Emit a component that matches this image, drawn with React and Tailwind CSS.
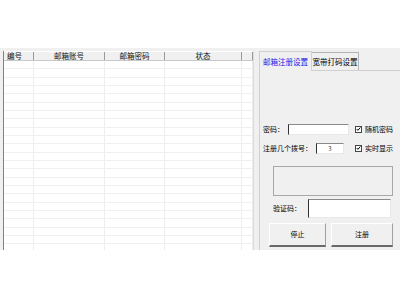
import React from 'react';

const font = { fontFamily: '"Noto Sans CJK SC", "Noto Sans", sans-serif' };

const columns = [
    { title: '编号', w: 'w-[30px]' },
    { title: '邮箱账号', w: 'w-[71px]' },
    { title: '邮箱密码', w: 'w-[60px]' },
    { title: '状态', w: 'w-[77px]' },
    { title: '', w: 'w-[11px]' },
];

const Check = () => (
    <span className="w-[7px] h-[7px] border border-[#444] bg-white flex items-center justify-center">
        <svg width="6" height="6" viewBox="0 0 6 6">
            <path d="M0.8 3 L2.3 4.6 L5.2 1.2" fill="none" stroke="#000" strokeWidth="1.2" />
        </svg>
    </span>
);

const Input = ({ className, children }) => (
    <div className={`bg-white border-t border-l border-t-[#8a8a8a] border-l-[#333] border-b border-r border-b-[#e8e8e8] border-r-[#e8e8e8] flex items-center justify-center text-[6px] text-[#333] ${className}`}>
        {children}
    </div>
);

const Button = ({ className, children }) => (
    <div className={`bg-[#f0f0f0] border border-t-white border-l-white border-r-[#a0a0a0] border-b-[#696969] border-b-2 flex items-center justify-center text-[7px] text-black ${className}`}>
        {children}
    </div>
);

export default function App() {
    const rows = Array.from({ length: 23 });
    return (
        <div className="w-[400px] h-[300px] bg-white overflow-hidden text-black" style={font}>
            <div className="h-[48px]" />
            <div className="h-[202px] bg-[#f0f0f0] flex overflow-hidden">
                {/* list view */}
                <div className="ml-[3px] mt-[3px] w-[251px] bg-white border-l border-l-[#828282] border-r border-r-[#dcdcdc] overflow-hidden">
                    <div className="flex h-[10px] bg-[#f0f0f0] border-b border-b-[#c8c8c8] border-t border-t-white">
                        {columns.map((c, i) => (
                            <div key={i} className={`${c.w} shrink-0 border-r border-r-[#9a9a9a] flex items-center justify-center text-[7.5px] leading-none text-[#111] ${i === 0 ? 'justify-start pl-[3px]' : ''}`}>
                                {c.title}
                            </div>
                        ))}
                    </div>
                    {rows.map((_, r) => (
                        <div key={r} className="flex h-[8.33px] border-b border-b-[#f0f0f0]">
                            {columns.map((c, i) => (
                                <div key={i} className={`${c.w} shrink-0 border-r border-r-[#ededed]`} />
                            ))}
                        </div>
                    ))}
                </div>

                {/* tab control */}
                <div className="ml-[5px] flex-1 flex flex-col">
                    <div className="flex items-end h-[22px] pt-[2px]">
                        <div className="w-[53px] h-[20px] bg-[#f0f0f0] border-t border-l border-r border-[#d0d0d0] flex items-center justify-center text-[7.5px] text-[#1a1ae6] -mb-px relative z-10">
                            邮箱注册设置
                        </div>
                        <div className="w-[47px] h-[18px] bg-[#f0f0f0] border-t border-r border-[#b4b4b4] flex items-center justify-center text-[7.5px] text-black">
                            宽带打码设置
                        </div>
                    </div>
                    <div className="flex-1 border-t border-l border-[#d0d0d0] flex flex-col">
                        <div className="h-[52px]" />
                        <div className="flex items-center h-[12px] pl-[3px]">
                            <span className="w-[25px] text-[7px]">密码：</span>
                            <Input className="w-[61px] h-[11px]" />
                            <div className="ml-[6px] flex items-center gap-[3px]">
                                <Check />
                                <span className="text-[7px]">随机密码</span>
                            </div>
                        </div>
                        <div className="flex items-center h-[12px] mt-[7px] pl-[3px]">
                            <span className="w-[53px] text-[7px] whitespace-nowrap">注册几个拨号：</span>
                            <Input className="w-[28px] h-[11px]">3</Input>
                            <div className="ml-[11px] flex items-center gap-[3px]">
                                <Check />
                                <span className="text-[7px]">实时显示</span>
                            </div>
                        </div>
                        <div className="ml-[13px] mt-[12px] w-[120px] h-[30px] border border-[#a8a8a8] bg-[#f0f0f0]" />
                        <div className="flex items-center ml-[13px] mt-[3px] h-[19px]">
                            <span className="w-[35px] text-[7px]">验证码：</span>
                            <Input className="w-[83px] h-[19px]" />
                        </div>
                        <div className="flex ml-[9px] mt-[5px] gap-[5px]">
                            <Button className="w-[57px] h-[24px]">停止</Button>
                            <Button className="w-[62px] h-[24px]">注册</Button>
                        </div>
                    </div>
                </div>
            </div>
        </div>
    );
}
